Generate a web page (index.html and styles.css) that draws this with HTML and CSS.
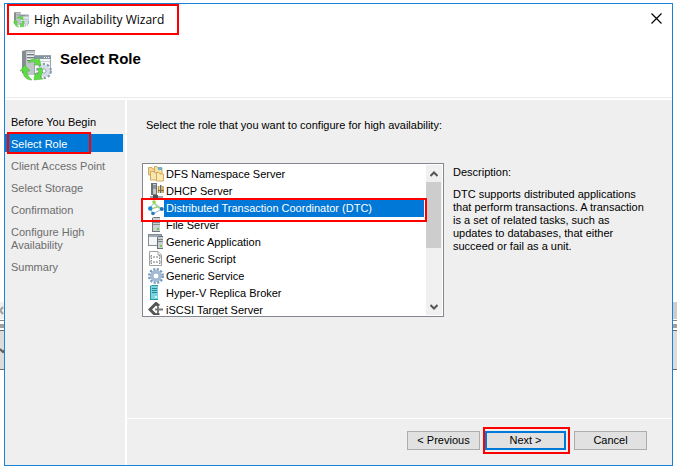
FILE: index.html
```html
<!DOCTYPE html>
<html lang="en">
<head>
    <meta charset="UTF-8">
    <meta name="viewport" content="width=device-width, initial-scale=1.0">
    <title>High Availability Wizard</title>
    <link rel="stylesheet" href="styles.css">
</head>
<body>
    <!-- parent window, only its edges show -->
    <div class="backdrop">
        <div class="back-scroll">
            <svg width="4" height="9" viewBox="0 0 4 9"><path d="M3 1L0 4.500L3 8" fill="none" stroke="#a0a0a0" stroke-width="2"/></svg>
        </div>
        <div class="back-split"></div>
        <div class="back-panel">
            <svg width="5" height="8" viewBox="0 0 5 8"><path d="M0 2L3 5L5 3" fill="none" stroke="#606060" stroke-width="2"/></svg>
        </div>
    </div>

    <svg class="defs" width="0" height="0">
        <symbol id="wizard" viewBox="0 0 32 32">
            <path d="M2 1L6 0H15V25H6L2 23Z" fill="#858d92"/>
            <path d="M6 1H15V25H6Z" fill="#bfc5c8"/>
            <path d="M7 3.500H14M7 6.500H14M7 9.500H14" stroke="#e9eced"/>
            <path d="M7 4.500H14M7 7.500H14M7 10.500H14" stroke="#737b80"/>
            <rect x="14.500" y="5.500" width="16" height="18" fill="#f4f6f7" stroke="#9ca5ab"/>
            <path d="M14 7.500H31" stroke="#8695a2" stroke-width="3"/>
            <path d="M24 7.500H30" stroke="#fff" stroke-dasharray="1 1"/>
            <path d="M15 11.500H30" stroke="#cbd2d7"/>
            <circle cx="24" cy="21" r="6.500" fill="none" stroke="#8b9bad" stroke-width="3" stroke-dasharray="2.200 1.884"/>
            <circle cx="24" cy="21" r="4.500" fill="#f5f8fa" stroke="#d1dce6" stroke-width="3"/>
            <circle cx="24" cy="21" r="2.200" fill="#fff" stroke="#8496a8"/>
            <g fill="#5fdc42" stroke="#3fb531" stroke-width=".5">
                <path d="M8 13C10 9 14 8 18 10L19 8L21 15L14 15L16 13C13 11 11 12 8 13Z"/>
                <path d="M5 15L10 21H7C7 25 9 27 12 30C7 30 3 27 3 21H0Z"/>
                <path d="M22 18C23 22 22 25 20 27L23 29L14 30L15 23L17 25C19 23 19 21 18 18Z"/>
            </g>
        </symbol>
    </svg>

    <main class="window">
        <header class="titlebar">
            <div class="caption">
                <svg class="icon" aria-hidden="true"><use href="#wizard"/></svg>
                <span>High Availability Wizard</span>
            </div>
            <button class="close" type="button" aria-label="Close">
                <svg width="11" height="11" viewBox="0 0 11 11"><path d="M.5.5L10.500 10.500M10.500.5L.5 10.500" stroke="#000" stroke-width="1.200"/></svg>
            </button>
        </header>

        <div class="banner">
            <svg class="banner-icon" aria-hidden="true"><use href="#wizard"/></svg>
            <h1>Select Role</h1>
        </div>

        <div class="content">
            <nav class="steps">
                <a class="step done" href="#">Before You Begin</a>
                <a class="step current" href="#">Select Role</a>
                <a class="step" href="#">Client Access Point</a>
                <a class="step" href="#">Select Storage</a>
                <a class="step" href="#">Confirmation</a>
                <a class="step" href="#">Configure High Availability</a>
                <a class="step" href="#">Summary</a>
            </nav>

            <form class="page">
                <div class="page-body">
                    <p class="prompt" id="prompt">Select the role that you want to configure for high availability:</p>
                    <div class="columns">
                        <div class="listbox">
                            <div class="roles" role="radiogroup" aria-labelledby="prompt">
                                <label class="role">
                                    <input type="radio" name="role">
                                    <svg class="icon" viewBox="0 0 16 16">
                                        <path d="M.5 1.500H4L5 3H9V9H.5Z" fill="#f3d68f" stroke="#cfac65"/>
                                        <path d="M6.500.5H9L10 2H14V8H6.500Z" fill="#f7df9d" stroke="#cfac65"/>
                                        <path d="M10 1H14V4H10Z" fill="#67b2cf"/>
                                        <path d="M2.500 5.500H6L7 7H11V14H2.500Z" fill="#f9e5ad" stroke="#cfac65"/>
                                        <path d="M8.500 6.500H11L12 8H15.500V15H8.500Z" fill="#fbe8b2" stroke="#cfac65"/>
                                    </svg>
                                    <span>DFS Namespace Server</span>
                                </label>
                                <label class="role">
                                    <input type="radio" name="role">
                                    <svg class="icon" viewBox="0 0 16 16">
                                        <path d="M3 0H9V12H3Z" fill="#6c7377"/>
                                        <path d="M5 1H8V11H5Z" fill="#c3c9cb"/>
                                        <path d="M5 3H8M5 5H8" stroke="#596065"/>
                                        <path d="M10.500 3V10M15 3V10" stroke="#c69a35" stroke-width="1.600"/>
                                        <path d="M12.700 2V10" stroke="#666" stroke-width="1.600"/>
                                        <path d="M10 7.500H16" stroke="#8b6d2c"/>
                                        <path d="M2 14H15M7 11V14" stroke="#888" stroke-width="1.600"/>
                                        <rect x="5" y="12" width="5" height="4" fill="#4e5357"/>
                                    </svg>
                                    <span>DHCP Server</span>
                                </label>
                                <label class="role">
                                    <input type="radio" name="role" checked>
                                    <svg class="icon" viewBox="0 0 16 16">
                                        <path d="M6 3L2 8L5 14L14 9Z" fill="none" stroke="#9cc5e3" stroke-width="1.200"/>
                                        <path d="M6 2L9 7L14 9M9 7L3 9" fill="none" stroke="#abd77c" stroke-width="1.400"/>
                                        <circle cx="6" cy="2" r="1.800" fill="#a2ce48"/>
                                        <circle cx="2.200" cy="8.500" r="2.200" fill="#258bd0"/>
                                        <circle cx="5" cy="13.500" r="1.800" fill="#2b79b8"/>
                                        <circle cx="13.800" cy="9" r="2" fill="#276fae"/>
                                    </svg>
                                    <span>Distributed Transaction Coordinator (DTC)</span>
                                </label>
                                <label class="role">
                                    <input type="radio" name="role">
                                    <svg class="icon" viewBox="0 0 16 16">
                                        <path d="M4 1L6 0H12V15H4Z" fill="#6f777c"/>
                                        <path d="M5 1H12V14H5Z" fill="#cbd0d2"/>
                                        <path d="M5 3.500H12M5 5.500H12M5 7.500H12" stroke="#858c90"/>
                                        <path d="M9 11H11V13H9Z" fill="#62c554"/>
                                    </svg>
                                    <span>File Server</span>
                                </label>
                                <label class="role">
                                    <input type="radio" name="role">
                                    <svg class="icon" viewBox="0 0 16 16">
                                        <rect x=".5" y=".5" width="13" height="11" fill="#f5f6f7" stroke="#858d94"/>
                                        <path d="M1 2H13" stroke="#9fabb6" stroke-width="2"/>
                                        <path d="M9 3L11 2H15V15H9Z" fill="#697177"/>
                                        <path d="M10 3H15V14H10Z" fill="#c8ced1"/>
                                        <path d="M10 5.500H15M10 7.500H15" stroke="#7b8388"/>
                                        <path d="M12 11H14V13H12Z" fill="#77cf53"/>
                                    </svg>
                                    <span>Generic Application</span>
                                </label>
                                <label class="role">
                                    <input type="radio" name="role">
                                    <svg class="icon" viewBox="0 0 16 16">
                                        <path d="M1.500.5H10L13.500 4V14.500H1.500Z" fill="#fff" stroke="#a0a0a0"/>
                                        <path d="M10 .5V4H13.500" fill="#eee" stroke="#aaa"/>
                                        <path d="M4 4.500H3V7.500H4M11 4.500H12V7.500H11M4 9.500H3V12.500H4M11 9.500H12V12.500H11" fill="none" stroke="#888"/>
                                        <path d="M5 6H10M5 11H10" stroke="#777" stroke-dasharray="2 1"/>
                                    </svg>
                                    <span>Generic Script</span>
                                </label>
                                <label class="role">
                                    <input type="radio" name="role">
                                    <svg class="icon" viewBox="0 0 16 16">
                                        <circle cx="8" cy="8" r="6.500" fill="none" stroke="#7a9abc" stroke-width="3" stroke-dasharray="2 1.403"/>
                                        <circle cx="8" cy="8" r="4.500" fill="none" stroke="#a3bbd4" stroke-width="3"/>
                                        <circle cx="8" cy="8" r="3" fill="#fff" stroke="#8ba6c2" stroke-width=".8"/>
                                    </svg>
                                    <span>Generic Service</span>
                                </label>
                                <label class="role">
                                    <input type="radio" name="role">
                                    <svg class="icon" viewBox="0 0 16 16">
                                        <path d="M2 1L4 0H10V15H2Z" fill="#2a97a5"/>
                                        <path d="M3 1H10V14H3Z" fill="#7bd4dd"/>
                                        <path d="M4 3.500H9M4 5.500H9M4 7.500H9" stroke="#258a98"/>
                                        <path d="M7 11H9V13H7Z" fill="#d3fbff"/>
                                    </svg>
                                    <span>Hyper-V Replica Broker</span>
                                </label>
                                <label class="role">
                                    <input type="radio" name="role">
                                    <svg class="icon" viewBox="0 0 16 16">
                                        <path d="M11 4L8 1.500L2 7.500L8 13.500L11 11" fill="none" stroke="#555" stroke-width="3"/>
                                        <path d="M7 7.500H15" stroke="#777" stroke-width="2"/>
                                        <path d="M10 5V10" stroke="#777" stroke-width="2"/>
                                    </svg>
                                    <span>iSCSI Target Server</span>
                                </label>
                            </div>
                            <div class="scrollbar">
                                <button type="button" aria-label="Scroll up">
                                    <svg width="8" height="6" viewBox="0 0 8 6"><path d="M.5 5L4 1.500L7.500 5" fill="none" stroke="#555" stroke-width="2"/></svg>
                                </button>
                                <div class="thumb"></div>
                                <button class="down" type="button" aria-label="Scroll down">
                                    <svg width="8" height="6" viewBox="0 0 8 6"><path d="M.5 1L4 4.500L7.500 1" fill="none" stroke="#555" stroke-width="2"/></svg>
                                </button>
                            </div>
                        </div>
                        <section class="description">
                            <h2>Description:</h2>
                            <p>DTC supports distributed applications that perform transactions. A transaction is a set of related tasks, such as updates to databases, that either succeed or fail as a unit.</p>
                        </section>
                    </div>
                </div>
                <footer class="actions">
                    <button type="button">&lt; Previous</button>
                    <button class="next" type="button">Next &gt;</button>
                    <button type="button">Cancel</button>
                </footer>
            </form>
        </div>
    </main>
</body>
</html>
```
FILE: styles.css
```css
* {
    box-sizing: border-box;
}
body {
    display: flex;
    min-height: 100vh;
    margin: 0;
    padding: 3px 4px 5px;
    background: #fff;
    color: #000;
    font-family: "Liberation Sans", Arial, sans-serif;
    font-size: 11px;
    line-height: 13px;
    --accent: #0078d7;
    --mark: #f00;
    --face: #efefef;
}
h1, h2, p {
    margin: 0;
}
button {
    padding: 0;
    border: none;
    background: none;
    color: inherit;
    font: inherit;
}
svg {
    display: block;
}
.defs {
    position: absolute;
}

/* Parent window */
.backdrop {
    position: absolute;
    inset: 0;
    z-index: -1;
    padding-top: 302px;
}
.back-scroll {
    height: 17px;
    padding-top: 4px;
    background: linear-gradient(to right, #f0f0f0 50%, #cdcdcd 50%);
}
.back-split {
    height: 8px;
    margin-top: 1px;
    border-top: 1px solid #828790;
    border-bottom: 4px solid #a0a0a0;
}
.back-panel {
    height: 40px;
    margin-top: 2px;
    padding-top: 16px;
    border-top: 1px solid #696969;
    border-bottom: 1px solid #696969;
    background: #dcdcdc;
}

.window {
    display: flex;
    flex: 1;
    flex-direction: column;
    border: 1px solid #1883d7;
    background: #fff;
}

/* Title bar */
.titlebar {
    display: flex;
    justify-content: space-between;
    align-items: center;
    height: 31px;
    padding: 0 10px 0 2px;
}
.caption {
    display: flex;
    align-items: center;
    gap: 5px;
    height: 31px;
    padding: 0 13px 0 4px;
    border: 2px solid var(--mark);
    font-family: "Open Sans", "Segoe UI", sans-serif;
    font-size: 12px;
}
.icon {
    flex: none;
    width: 16px;
    height: 16px;
}
.close {
    padding-bottom: 2px;
}

.banner {
    display: flex;
    gap: 8px;
    height: 63px;
    padding: 15px 15px 0;
    border-bottom: 1px solid #ebebeb;
}
.banner-icon {
    width: 32px;
    height: 32px;
}
h1 {
    font-size: 15px;
    line-height: 18px;
}

.content {
    display: flex;
    flex: 1;
    margin-top: 2px;
    background: var(--face);
}

/* Steps on the left */
.steps {
    display: flex;
    flex: none;
    flex-direction: column;
    gap: 4px;
    width: 122px;
    padding: 12px 2px 0 0;
    border-right: 2px solid #fff;
}
.step {
    position: relative;
    padding: 4px 10px 1px 6px;
    color: #6d6d6d;
    text-decoration: none;
}
.step.done {
    color: #000;
}
.step.current {
    background: var(--accent);
    color: #fff;
}
.step.current::after {
    content: "";
    position: absolute;
    inset: -2px 32px -2px 2px;
    border: 2px solid var(--mark);
}

.page {
    display: flex;
    flex: 1;
    flex-direction: column;
}
.page-body {
    flex: 1;
    padding: 19px 24px 0 15px;
}
.prompt {
    padding-left: 4px;
}
.columns {
    display: flex;
    gap: 9px;
    margin-top: 31px;
}

/* Role list */
.listbox {
    position: relative;
    display: flex;
    flex: 0 1 302px;
    height: 154px;
    padding: 1px;
    border: 1px solid #828790;
    background: #fff;
}
.roles {
    flex: 1;
    overflow: hidden;
    padding: 1px 2px 0 4px;
}
.role {
    display: flex;
    height: 17px;
}
.role input {
    position: absolute;
    opacity: 0;
    pointer-events: none;
}
.role span {
    flex: 1;
    padding: 2px;
    white-space: nowrap;
}
.role input:checked ~ span {
    background: var(--accent);
    color: #fff;
}
.role:has(input:checked)::after {
    content: "";
    position: absolute;
    top: 34px;
    left: -2px;
    right: 16px;
    height: 20px;
    border: 2px solid var(--mark);
}
.scrollbar {
    display: flex;
    flex: none;
    flex-direction: column;
    width: 16px;
    background: #f0f0f0;
}
.scrollbar button {
    display: grid;
    place-items: center;
    height: 17px;
}
.scrollbar .down {
    margin-top: auto;
}
.thumb {
    height: 66px;
    margin-right: 1px;
    background: #cdcdcd;
}

.description {
    flex: 1;
    padding-top: 3px;
}
.description h2 {
    margin-bottom: 9px;
    font-size: 11px;
    font-weight: normal;
}

/* Wizard buttons */
.actions {
    display: flex;
    justify-content: flex-end;
    gap: 8px;
    padding: 12px 25px 15px;
    border-top: 1px solid #fff;
}
.actions button {
    width: 73px;
    height: 19px;
    border: 1px solid #adadad;
    background: #e1e1e1;
}
.actions .next {
    position: relative;
    width: 81px;
    margin-left: -3px;
    border: 2px solid var(--accent);
}
.next::after {
    content: "";
    position: absolute;
    inset: -6px -6px -6px -4px;
    border: 2px solid var(--mark);
}
```
